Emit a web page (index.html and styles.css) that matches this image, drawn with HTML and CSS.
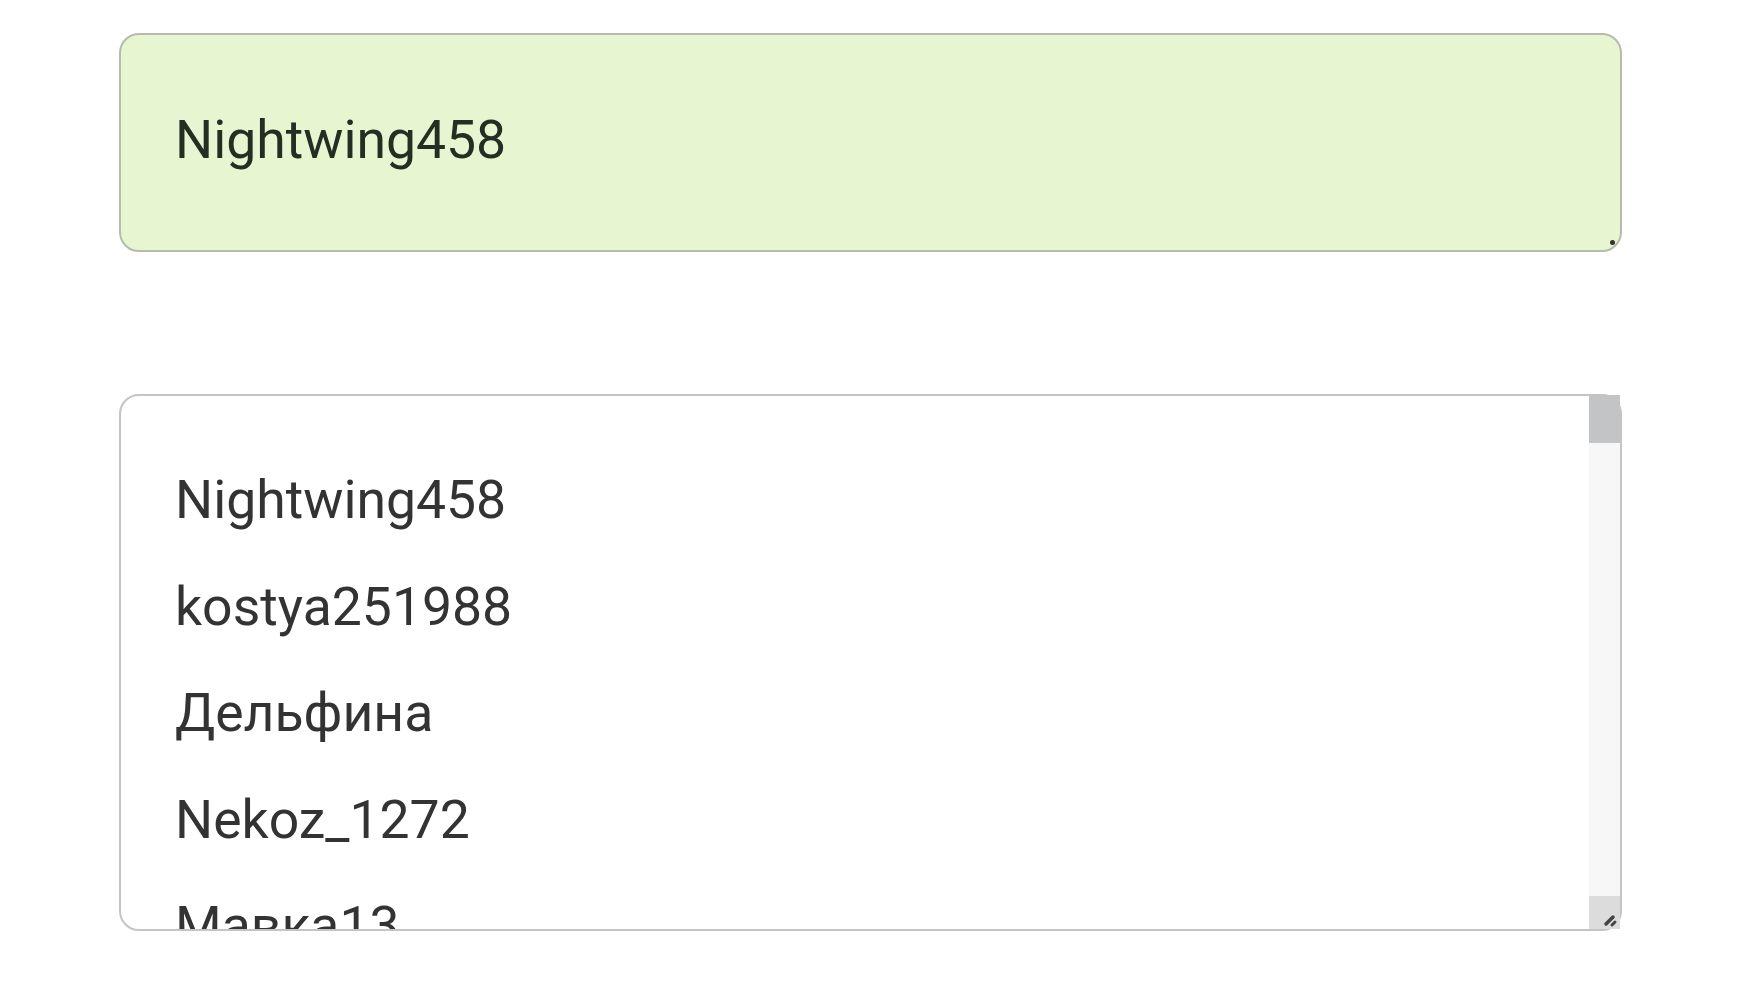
FILE: index.html
```html
<!DOCTYPE html>
<html>
<head>
    <title>Nick picker</title>
    <meta charset="UTF-8">
    <link rel="stylesheet" href="styles.css">
</head>
<body>
    <div class="container">
        <div class="nick-field">
            <span class="nick-value">Nightwing458</span>
            <span class="field-grip"></span>
        </div>

        <div class="nick-list">
            <div class="nick-options">
                <div class="nick-option">Nightwing458</div>
                <div class="nick-option">kostya251988</div>
                <div class="nick-option">Дельфина</div>
                <div class="nick-option">Nekoz_1272</div>
                <div class="nick-option">Мавка13</div>
            </div>
            <div class="list-scrollbar">
                <div class="scroll-thumb"></div>
                <div class="scroll-track"></div>
                <div class="scroll-corner">
                    <svg width="18" height="18" viewBox="0 0 18 18">
                        <path d="M4 13 L11 6" stroke="#444" stroke-width="3.5" stroke-linecap="round"/>
                        <path d="M10 14 L13 11" stroke="#444" stroke-width="3" stroke-linecap="round"/>
                    </svg>
                </div>
            </div>
        </div>
    </div>
</body>
</html>
```

FILE: styles.css
```css
body {
    margin: 0;
    background-color: #fff;
    font-family: Roboto, "Noto Sans", sans-serif;
}

.container {
    display: flex;
    flex-direction: column;
    gap: 142px;
    padding: 33px 119px 0 119px;
}

.nick-field {
    position: relative;
    padding: 74px 0 80px 54px;
    background-color: #e7f5d1;
    border: 2px solid #b6bbaf;
    border-radius: 20px;
    font-size: 53.5px;
    line-height: 61px;
    color: #262d22;
}

.field-grip {
    position: absolute;
    right: 5px;
    bottom: 5px;
    width: 5px;
    height: 5px;
    border-radius: 50%;
    background-color: #333;
}

.nick-list {
    display: flex;
    height: 533px;
    border: 2px solid #c4c4c4;
    border-radius: 20px;
}

.nick-options {
    flex: 1;
    overflow: hidden;
    padding: 51px 0 0 54px;
    border-radius: 20px 0 0 20px;
    font-size: 53.5px;
    line-height: 106.5px;
    color: #333;
}

.nick-option {
    white-space: nowrap;
}

.list-scrollbar {
    display: flex;
    flex-direction: column;
    width: 31px;
    margin-top: -1px;
}

.scroll-thumb {
    height: 48px;
    background-color: #c3c4c6;
}

.scroll-track {
    flex: 1;
    background-color: #f7f7f7;
}

.scroll-corner {
    display: flex;
    align-items: flex-end;
    justify-content: flex-end;
    height: 33px;
    background-color: #dcdcdc;
}
```
